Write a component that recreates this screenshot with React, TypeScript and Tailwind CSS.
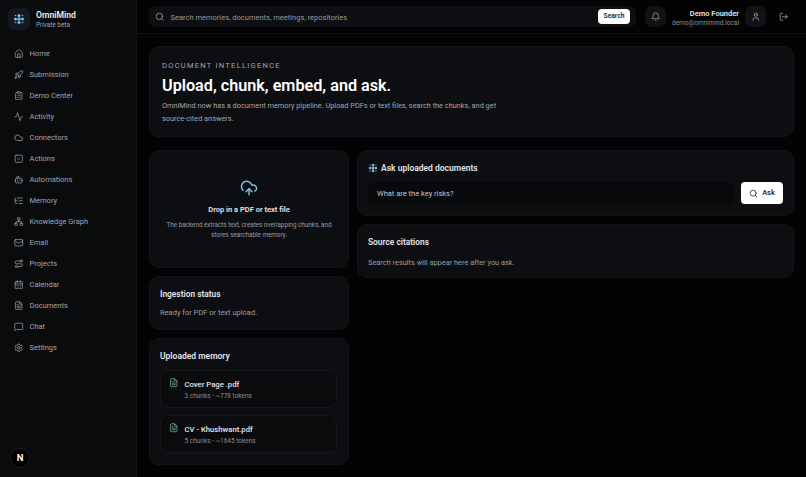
import {
  Activity,
  Bell,
  Bot,
  CalendarDays,
  ClipboardList,
  Cloud,
  CloudUpload,
  FileText,
  Home,
  ListTree,
  LogOut,
  Mail,
  MessageSquare,
  Network,
  Rocket,
  Route,
  Search,
  Settings,
  SquareCheck,
  User,
} from "lucide-react";

const navItems = [
  { label: "Home", icon: Home },
  { label: "Submission", icon: Rocket },
  { label: "Demo Center", icon: ClipboardList },
  { label: "Activity", icon: Activity },
  { label: "Connectors", icon: Cloud },
  { label: "Actions", icon: SquareCheck },
  { label: "Automations", icon: Bot },
  { label: "Memory", icon: ListTree },
  { label: "Knowledge Graph", icon: Network },
  { label: "Email", icon: Mail },
  { label: "Projects", icon: Route },
  { label: "Calendar", icon: CalendarDays },
  { label: "Documents", icon: FileText },
  { label: "Chat", icon: MessageSquare },
  { label: "Settings", icon: Settings },
];

const files = [
  { name: "Cover Page .pdf", meta: "3 chunks - ~778 tokens" },
  { name: "CV - Khushwant.pdf", meta: "5 chunks - ~1645 tokens" },
];

function Spark({ className }: { className: string }) {
  return (
    <svg viewBox="0 0 24 24" className={className} fill="currentColor">
      <path d="M12 5v14M5 12h14" stroke="currentColor" strokeWidth="2" />
      <circle cx="12" cy="12" r="3" />
      <circle cx="12" cy="5" r="3.2" />
      <circle cx="12" cy="19" r="3.2" />
      <circle cx="5" cy="12" r="3.2" />
      <circle cx="19" cy="12" r="3.2" />
      <circle cx="5" cy="5" r="1.6" />
      <circle cx="19" cy="5" r="1.6" />
      <circle cx="5" cy="19" r="1.6" />
      <circle cx="19" cy="19" r="1.6" />
    </svg>
  );
}

function Sidebar() {
  return (
    <aside className="flex w-[137px] shrink-0 flex-col border-r border-[#111216] bg-[#0a0b0d] pb-[9px]">
      <div className="flex items-center gap-[6px] pl-[8px] pt-[8px]">
        <div className="flex h-[22px] w-[22px] items-center justify-center rounded-[7px] bg-[#16181d]">
          <Spark className="h-[12px] w-[12px] text-[#6fb4dc]" />
        </div>
        <div className="mt-[1px]">
          <div className="text-[8.6px] leading-[12px] font-semibold text-[#eceef0]">OmniMind</div>
          <div className="text-[6.4px] leading-[9px] text-[#a3a6ab]">Private beta</div>
        </div>
      </div>
      <nav className="mt-[13px] flex flex-col pl-[14px]">
        {navItems.map((item) => (
          <div key={item.label} className="flex h-[21px] items-center gap-[6px] text-[#a3a6ab]">
            <item.icon className="h-[9.5px] w-[9.5px]" strokeWidth={1.8} />
            <span className="text-[7.5px]">{item.label}</span>
          </div>
        ))}
      </nav>
      <div className="mt-auto pl-[10px]">
        <div className="flex h-[20px] w-[20px] items-center justify-center rounded-full border border-[#1c1d20] bg-black text-[9.5px] font-semibold text-white">
          N
        </div>
      </div>
    </aside>
  );
}

function Topbar() {
  return (
    <header className="flex h-[34px] shrink-0 items-center border-b border-[#0e0f12] pl-[12px] pr-[12px]">
      <div className="flex h-[21px] w-[487px] items-center rounded-[7px] bg-[#0e0f12] pl-[6px] pr-[6px]">
        <Search className="h-[9.5px] w-[9.5px] text-[#a3a6ab]" />
        <span className="ml-[6px] mt-[2px] text-[7.5px] text-[#94979d]">Search memories, documents, meetings, repositories</span>
        <button className="ml-auto flex h-[15px] w-[32px] items-center justify-center rounded-[4px] bg-white text-[6.7px] font-semibold text-[#222]">
          Search
        </button>
      </div>
      <div className="ml-[9px] flex h-[21px] w-[21px] items-center justify-center rounded-[7px] bg-[#111216]">
        <Bell className="h-[9.5px] w-[9.5px] text-[#a3a6ab]" />
      </div>
      <div className="ml-auto mt-[4px] text-right">
        <div className="text-[7.5px] leading-[10px] font-semibold text-[#e4e5e7]">Demo Founder</div>
        <div className="text-[6.5px] leading-[9px] text-[#8b8e94]">demo@omnimind.local</div>
      </div>
      <div className="ml-[6px] flex h-[21px] w-[21px] items-center justify-center rounded-[7px] bg-[#111216]">
        <User className="h-[9.5px] w-[9.5px] text-[#a3a6ab]" />
      </div>
      <div className="ml-[7px] flex h-[21px] w-[21px] items-center justify-center">
        <LogOut className="h-[9.5px] w-[9.5px] text-[#a3a6ab]" />
      </div>
    </header>
  );
}

function Card({ className, children }: { className: string; children: React.ReactNode }) {
  return <section className={"rounded-[10px] border border-[#131418] bg-[#0d0e11] " + className}>{children}</section>;
}

function Main() {
  return (
    <main className="flex min-w-0 flex-1 flex-col bg-[#030304]">
      <Topbar />
      <div className="flex flex-col gap-[13px] pl-[12px] pr-[12px] pt-[12px]">
        <Card className="h-[91px] pl-[12px] pt-[13px]">
          <div className="text-[7.6px] leading-[11px] tracking-[0.16em] text-[#a3a6ab]">DOCUMENT INTELLIGENCE</div>
          <h1 className="mt-[2px] text-[16.2px] leading-[25px] font-semibold text-white">Upload, chunk, embed, and ask.</h1>
          <p className="mt-[1px] w-[350px] text-[7.35px] leading-[13px] text-[#a3a6ab]">
            OmniMind now has a document memory pipeline. Upload PDFs or text files, search the chunks, and get source-cited answers.
          </p>
        </Card>
        <div className="flex gap-[8px]">
          <div className="flex w-[200px] shrink-0 flex-col gap-[8px]">
            <Card className="flex h-[118px] flex-col items-center pt-[28px]">
              <CloudUpload className="h-[18px] w-[18px] text-[#7fc0e6]" strokeWidth={1.9} />
              <div className="mt-[7px] text-[7.5px] leading-[12px] font-semibold text-[#e4e5e7]">Drop in a PDF or text file</div>
              <p className="mt-[4px] w-[170px] text-center text-[6.3px] leading-[10px] text-[#9a9da3]">
                The backend extracts text, creates overlapping chunks, and stores searchable memory.
              </p>
            </Card>
            <Card className="h-[54px] pl-[10px] pt-[11px]">
              <div className="text-[8.4px] leading-[12px] font-semibold text-[#e4e5e7]">Ingestion status</div>
              <p className="mt-[7px] text-[7.5px] leading-[12px] text-[#9a9da3]">Ready for PDF or text upload.</p>
            </Card>
            <Card className="h-[127px] pl-[10px] pr-[11px] pt-[11px]">
              <div className="text-[8.5px] leading-[12px] font-semibold text-[#e4e5e7]">Uploaded memory</div>
              <div className="mt-[8px] flex flex-col gap-[7px]">
                {files.map((file) => (
                  <div key={file.name} className="flex h-[38px] gap-[6px] rounded-[7px] border border-[#16171b] bg-[#0a0b0d] pl-[8px] pt-[7px]">
                    <FileText className="h-[9.5px] w-[9.5px] text-[#7fb89b]" strokeWidth={1.8} />
                    <div>
                      <div className="mt-[1px] text-[7.7px] leading-[12px] font-medium text-[#e4e5e7]">{file.name}</div>
                      <div className="text-[6.5px] leading-[10px] text-[#8b8e94]">{file.meta}</div>
                    </div>
                  </div>
                ))}
              </div>
            </Card>
          </div>
          <div className="flex min-w-0 flex-1 flex-col gap-[8px]">
            <Card className="h-[66px] pl-[10px] pr-[10px] pt-[11px]">
              <div className="flex items-center gap-[3px]">
                <Spark className="h-[10px] w-[10px] text-[#6fb4dc]" />
                <span className="text-[8.5px] leading-[12px] font-semibold text-[#e4e5e7]">Ask uploaded documents</span>
              </div>
              <div className="mt-[8px] flex gap-[6px]">
                <div className="flex h-[23px] flex-1 items-center rounded-[7px] bg-[#08090b] pl-[9px] text-[7.5px] text-[#c4c6ca]">
                  What are the key risks?
                </div>
                <button className="flex h-[22px] w-[42px] items-center justify-center gap-[4px] rounded-[4px] bg-white text-[7.5px] font-medium text-[#222]">
                  <Search className="h-[9px] w-[9px]" />
                  Ask
                </button>
              </div>
            </Card>
            <Card className="h-[54px] pl-[10px] pt-[11px]">
              <div className="text-[8.4px] leading-[12px] font-semibold text-[#e4e5e7]">Source citations</div>
              <p className="mt-[9px] text-[7.4px] leading-[12px] text-[#9a9da3]">Search results will appear here after you ask.</p>
            </Card>
          </div>
        </div>
      </div>
    </main>
  );
}

export default function App() {
  return (
    <div className="flex h-[477px] w-[806px] overflow-hidden bg-[#030304] font-['Roboto',sans-serif]">
      <Sidebar />
      <Main />
    </div>
  );
}
